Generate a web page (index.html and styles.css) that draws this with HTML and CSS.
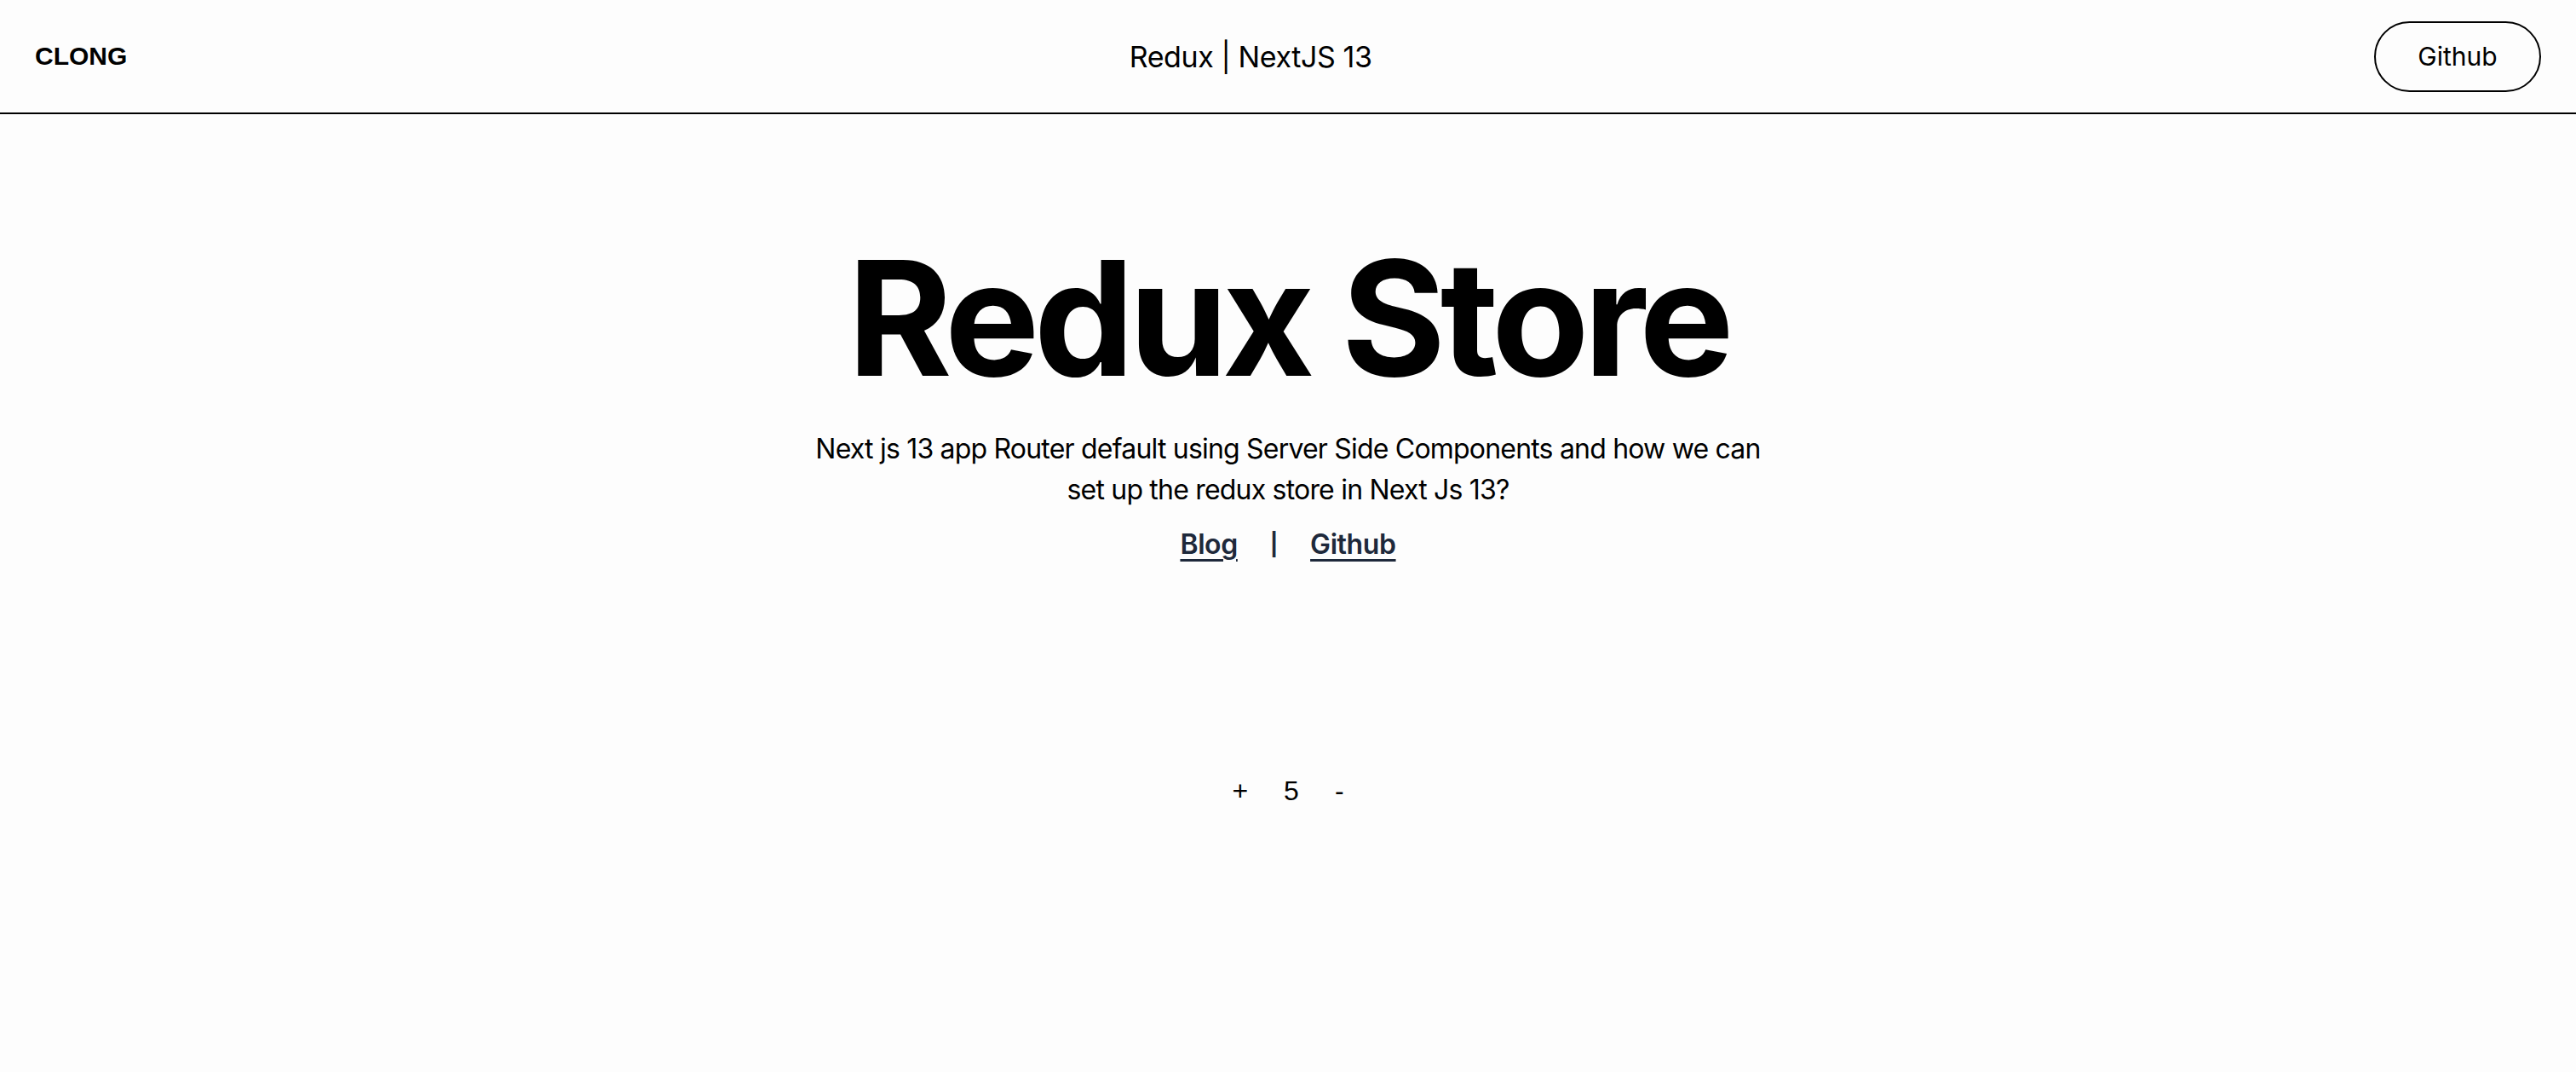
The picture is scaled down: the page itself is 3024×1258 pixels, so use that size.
FILE: index.html
```html
<!DOCTYPE html>
<html lang="en">
<head>
<meta charset="utf-8">
<title>Redux | NextJS 13</title>
<link rel="stylesheet" href="styles.css">
</head>
<body>
<header class="topbar">
  <div class="brand">CLONG</div>
  <div class="top-title">Redux | NextJS 13</div>
  <a class="gh-btn" href="#">Github</a>
</header>
<main class="hero">
  <h1 class="hero-title">Redux Store</h1>
  <p class="hero-text">Next js 13 app Router default using Server Side Components and how we can set up the redux store in Next Js 13?</p>
  <nav class="hero-links">
    <a href="#">Blog</a>
    <span class="sep">|</span>
    <a href="#">Github</a>
  </nav>
  <div class="counter">
    <button class="cbtn">+</button>
    <span class="cval">5</span>
    <button class="cbtn">-</button>
  </div>
</main>
</body>
</html>
```
FILE: styles.css
```css
* { box-sizing: border-box; }
html, body { margin: 0; padding: 0; }
body {
  background: #fdfdfd;
  color: #000;
  font-family: Inter, "Liberation Sans", sans-serif;
}
.topbar {
  height: 134px;
  padding: 0 41px;
  border-bottom: 2px solid #000;
  display: flex;
  justify-content: space-between;
  align-items: center;
}
.brand {
  font-family: "Liberation Sans", Arial, sans-serif;
  font-weight: 700;
  font-size: 30px;
}
.top-title {
  font-size: 34px;
  letter-spacing: -0.4px;
}
.gh-btn {
  display: inline-flex;
  align-items: center;
  justify-content: center;
  width: 196px;
  height: 83px;
  border: 2px solid #000;
  border-radius: 999px;
  color: #000;
  text-decoration: none;
  font-size: 30px;
}
.hero {
  display: flex;
  flex-direction: column;
  align-items: center;
  padding-top: 146px;
}
.hero-title {
  margin: 0;
  font-size: 187px;
  line-height: 1;
  font-weight: 700;
  letter-spacing: -6.5px;
}
.hero-text {
  margin: 36px 0 0;
  max-width: 1152px;
  text-align: center;
  font-size: 32px;
  line-height: 48px;
  letter-spacing: -0.8px;
}
.hero-links {
  margin-top: 16px;
  display: flex;
  align-items: center;
  gap: 38px;
  font-size: 32px;
  line-height: 48px;
  font-weight: 600;
  color: #1e293b;
  letter-spacing: -0.4px;
}
.hero-links a { color: #1e293b; text-decoration: underline; text-underline-offset: 6px; text-decoration-thickness: 3px; }
.hero-links .sep { font-weight: 700; font-size: 26px; }
.counter {
  margin-top: 241px;
  display: flex;
  align-items: center;
  gap: 42px;
  font-family: "Liberation Sans", Arial, sans-serif;
  font-size: 32px;
  line-height: 48px;
}
.cbtn {
  background: none;
  border: 0;
  padding: 0;
  font: inherit;
  color: #000;
}
```
